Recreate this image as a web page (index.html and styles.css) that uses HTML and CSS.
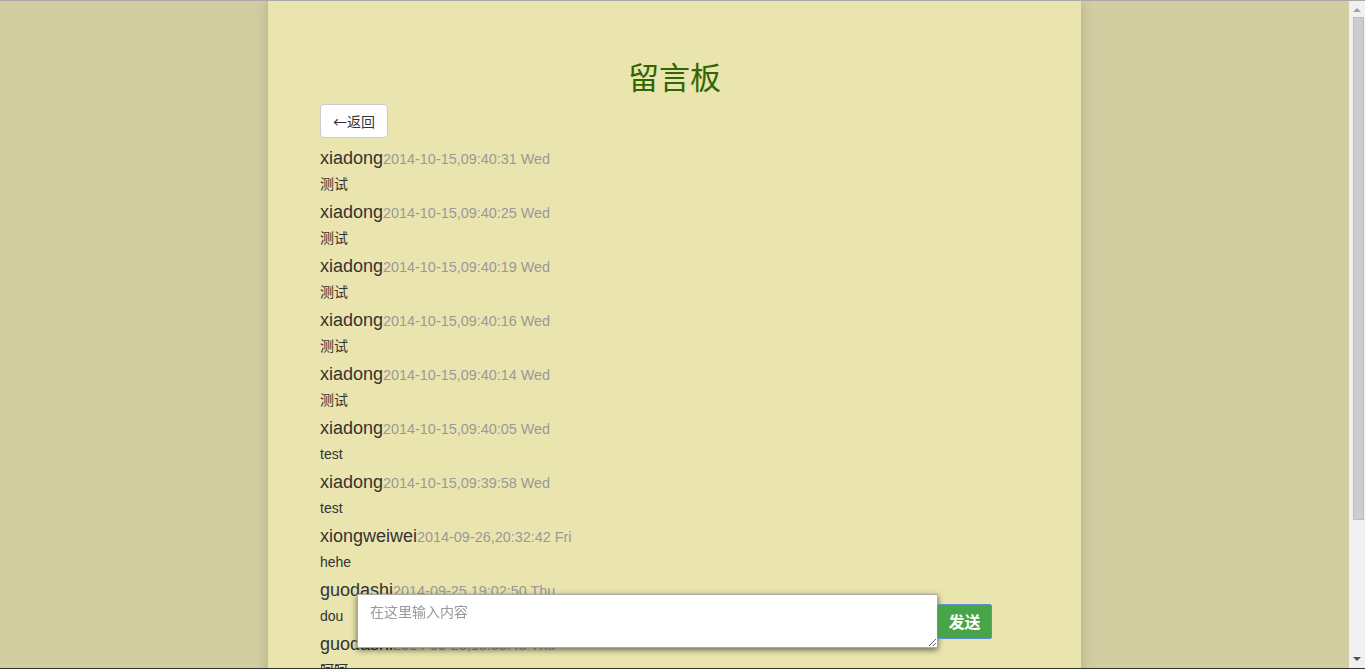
FILE: index.html
```html
<!DOCTYPE html>
<html lang="zh">
<head>
<meta charset="utf-8">
<title>留言板</title>
<link rel="stylesheet" href="styles.css">
</head>
<body>
<div class="page">
  <h1 class="title">留言板</h1>
  <button class="btn-back">←返回</button>
  <div class="list">
    <div class="entry"><div class="head"><span class="name">xiadong</span><span class="date">2014-10-15,09:40:31 Wed</span></div><div class="msg">测试</div></div>
    <div class="entry"><div class="head"><span class="name">xiadong</span><span class="date">2014-10-15,09:40:25 Wed</span></div><div class="msg">测试</div></div>
    <div class="entry"><div class="head"><span class="name">xiadong</span><span class="date">2014-10-15,09:40:19 Wed</span></div><div class="msg">测试</div></div>
    <div class="entry"><div class="head"><span class="name">xiadong</span><span class="date">2014-10-15,09:40:16 Wed</span></div><div class="msg">测试</div></div>
    <div class="entry"><div class="head"><span class="name">xiadong</span><span class="date">2014-10-15,09:40:14 Wed</span></div><div class="msg">测试</div></div>
    <div class="entry"><div class="head"><span class="name">xiadong</span><span class="date">2014-10-15,09:40:05 Wed</span></div><div class="msg">test</div></div>
    <div class="entry"><div class="head"><span class="name">xiadong</span><span class="date">2014-10-15,09:39:58 Wed</span></div><div class="msg">test</div></div>
    <div class="entry"><div class="head"><span class="name">xiongweiwei</span><span class="date">2014-09-26,20:32:42 Fri</span></div><div class="msg">hehe</div></div>
    <div class="entry"><div class="head"><span class="name">guodashi</span><span class="date">2014-09-25,19:02:50 Thu</span></div><div class="msg">dou</div></div>
    <div class="entry"><div class="head"><span class="name">guodashi</span><span class="date">2014-09-25,18:53:43 Thu</span></div><div class="msg">呵呵</div></div>
  </div>
</div>
<div class="composer">
  <div class="composer-inner">
    <textarea class="input" placeholder="在这里输入内容"></textarea>
    <button class="btn-send">发送</button>
  </div>
</div>
<div class="scrollbar">
  <div class="arrow arrow-up"></div>
  <div class="thumb"></div>
  <div class="arrow arrow-down"></div>
</div>
<div class="edge-top"></div>
<div class="edge-bottom"></div>
</body>
</html>
```
FILE: styles.css
```css
html, body {
  margin: 0;
  padding: 0;
}
html {
  overflow: hidden;
  height: 100%;
}
body {
  background: #d3cea2;
  font-family: "Liberation Sans", Arial, "Noto Sans CJK SC", sans-serif;
  font-size: 14px;
  color: #333;
  margin-right: 16px;
  height: 100%;
  overflow: hidden;
}
.page {
  width: 709px;
  margin: 0 auto;
  padding: 56px 52px 120px;
  background: #eae5ae;
  box-shadow: 0 0 14px rgba(0, 0, 0, 0.16);
  min-height: 900px;
}
.title {
  margin: 0;
  text-align: center;
  font-family: "Noto Sans CJK SC", sans-serif;
  font-weight: 400;
  font-size: 31px;
  line-height: 40px;
  color: #336600;
}
.btn-back {
  display: block;
  margin-top: 8px;
  height: 34px;
  padding: 0 12px;
  background: #fff;
  border: 1px solid #ccc;
  border-radius: 4px;
  font-family: "Noto Sans CJK SC", sans-serif;
  font-size: 14px;
  color: #333;
}
.list {
  margin-top: 7px;
}
.entry {
  margin-bottom: 2px;
}
.head {
  line-height: 26px;
  height: 26px;
}
.name {
  font-size: 18px;
  color: #333;
}
.date {
  font-size: 14.4px;
  color: #999;
}
.msg {
  line-height: 26px;
  font-size: 14px;
  color: #333;
}
.composer {
  position: fixed;
  left: 0;
  right: 16px;
  bottom: 21px;
  display: flex;
  justify-content: center;
}
.composer-inner {
  width: 724px;
  padding-left: 89px;
  display: flex;
  align-items: center;
}
.input {
  width: 581px;
  height: 54px;
  box-sizing: border-box;
  margin: 0;
  padding: 6px 12px;
  border: 1px solid #aaa;
  background: #fff;
  box-shadow: 0 2px 6px rgba(0, 0, 0, 0.55);
  font-family: "Noto Sans CJK SC", sans-serif;
  font-size: 14px;
  color: #333;
  resize: both;
}
.input::placeholder {
  color: #999;
}
.btn-send {
  margin-left: -1px;
  width: 55px;
  height: 35px;
  background: #47a447;
  border: 1px solid #5b8fd0;
  border-radius: 2px;
  color: #fff;
  font-family: "Noto Sans CJK SC", sans-serif;
  font-weight: 700;
  font-size: 16px;
  padding: 0;
}
.scrollbar {
  position: fixed;
  top: 0;
  right: 0;
  bottom: 0;
  width: 16px;
  background: #f1f1f1;
  display: flex;
  flex-direction: column;
  align-items: center;
}
.arrow {
  width: 0;
  height: 0;
  border-left: 4px solid transparent;
  border-right: 4px solid transparent;
}
.arrow-up {
  margin-top: 8px;
  border-bottom: 4px solid #a3a3a3;
}
.arrow-down {
  margin-top: auto;
  margin-bottom: 8px;
  border-top: 4px solid #505050;
}
.thumb {
  margin-top: 5px;
  width: 11px;
  height: 503px;
  background: #cdcdcd;
  border: 1px solid #bdbdbd;
  box-sizing: border-box;
  align-self: flex-end;
  margin-right: 1px;
}
.edge-top {
  position: fixed;
  top: 0;
  left: 0;
  right: 0;
  height: 1px;
  background: #a8a8a8;
}
.edge-bottom {
  position: fixed;
  bottom: 0;
  left: 0;
  right: 0;
  height: 1px;
  background: #333;
}
```
